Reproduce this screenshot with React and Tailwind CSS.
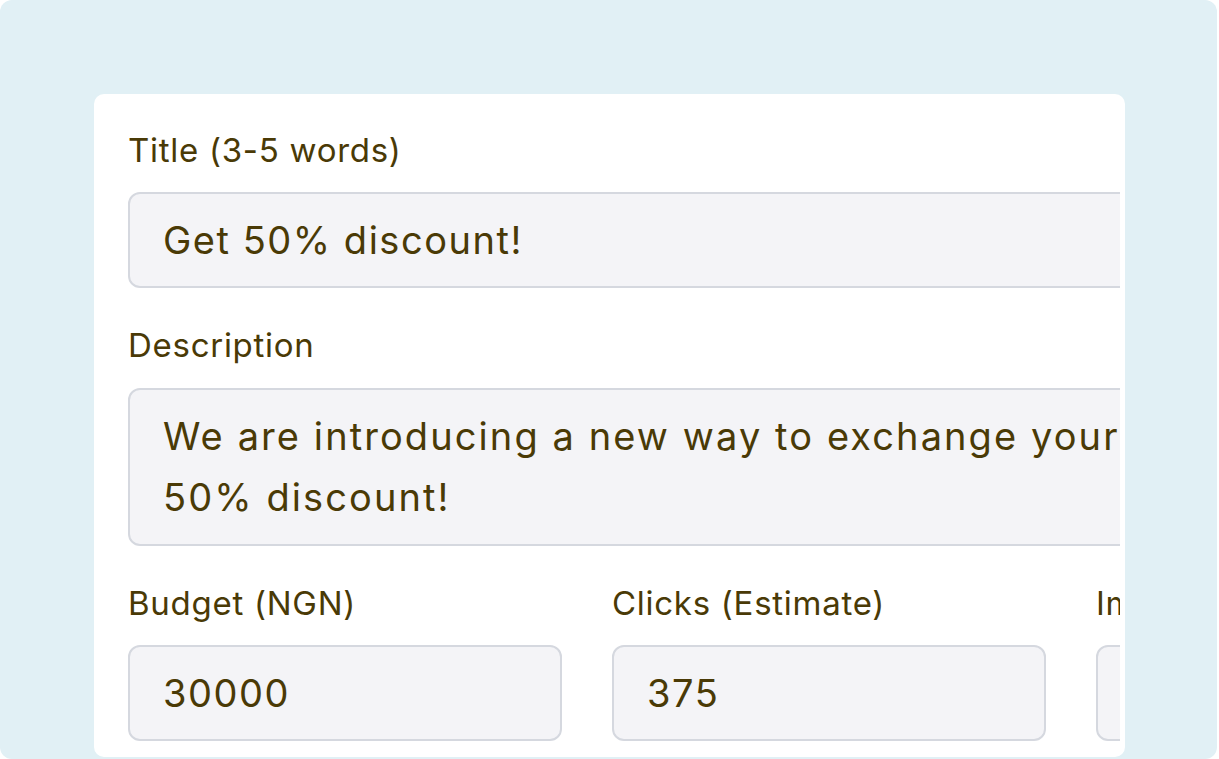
const fieldText = "flex items-center h-[96px] rounded-[12px] border-2 border-[#d5d8df] bg-[#f4f4f7] pl-[33px] text-[38px] tracking-[0.04em] text-[#4a3a06] whitespace-nowrap";
const labelText = "block h-[40px] leading-[40px] text-[33px] tracking-[0.022em] text-[#4a3a06] whitespace-nowrap";

function Field({ label, value }) {
  return (
    <div className="flex flex-col gap-[22px]">
      <span className={labelText}>{label}</span>
      <div className={fieldText}>{value}</div>
    </div>
  );
}

export default function App() {
  return (
    <div className="w-[1219px] h-[759px] bg-white" style={{ fontFamily: "Inter, 'Noto Sans', sans-serif" }}>
      <div className="w-[1217px] h-[759px] rounded-[12px] bg-[#e1f0f5] pt-[94px] pl-[94px] overflow-hidden">
        <div className="w-[1031px] h-[663px] rounded-[10px] bg-white pl-[34px] pr-[5px] pt-[36px]">
          <div className="w-full h-full overflow-hidden">
            <div className="w-[1402px] flex flex-col gap-[37px]">
              <Field label="Title (3-5 words)" value="Get 50% discount!" />

              <div className="flex flex-col gap-[23px]">
                <span className={labelText}>Description</span>
                <div className="flex items-center h-[158px] rounded-[12px] border-2 border-[#d5d8df] bg-[#f4f4f7] pl-[33px] text-[38px] tracking-[0.055em] leading-[61px] text-[#4a3a06] whitespace-nowrap">
                  <div>
                    <div>We are introducing a new way to exchange your gift cards and get</div>
                    <div>50% discount!</div>
                  </div>
                </div>
              </div>

              <div className="grid grid-cols-3 gap-x-[50px]">
                <Field label="Budget (NGN)" value="30000" />
                <Field label="Clicks (Estimate)" value="375" />
                <Field label="Impressions (Estimate)" value="1500" />
              </div>
            </div>
          </div>
        </div>
      </div>
    </div>
  );
}
